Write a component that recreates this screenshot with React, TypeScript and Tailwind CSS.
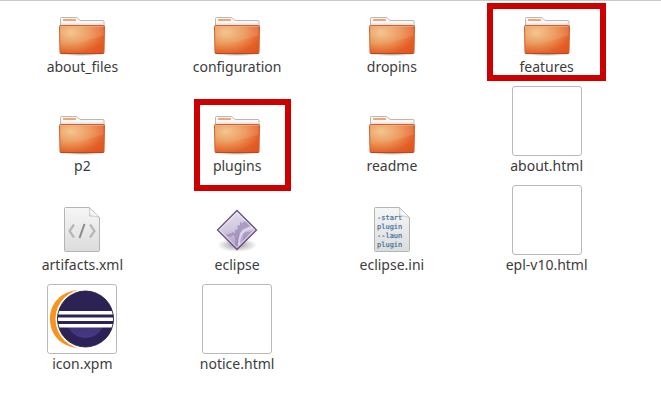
import type { ReactNode } from 'react';

type IconKind = 'folder' | 'blank' | 'xml' | 'ini' | 'launcher' | 'logo';

interface FileEntry {
  name: string;
  kind: IconKind;
  mark?: string;
}

const FILES: FileEntry[] = [
  { name: 'about_files', kind: 'folder' },
  { name: 'configuration', kind: 'folder' },
  { name: 'dropins', kind: 'folder' },
  { name: 'features', kind: 'folder', mark: 'top-0.5 left-[18px] w-[119px] h-[78px]' },
  { name: 'p2', kind: 'folder' },
  { name: 'plugins', kind: 'folder', mark: 'top-[13px] left-[34px] w-[97px] h-[92px]' },
  { name: 'readme', kind: 'folder' },
  { name: 'about.html', kind: 'blank' },
  { name: 'artifacts.xml', kind: 'xml' },
  { name: 'eclipse', kind: 'launcher' },
  { name: 'eclipse.ini', kind: 'ini' },
  { name: 'epl-v10.html', kind: 'blank' },
  { name: 'icon.xpm', kind: 'logo' },
  { name: 'notice.html', kind: 'blank' },
];

// Gradients shared by every icon, defined once for the page
function IconDefs() {
  return (
    <svg className="absolute w-0 h-0" aria-hidden="true">
      <defs>
        <radialGradient id="folderFront" cx="0.25" cy="0.25" r="0.95">
          <stop offset="0" stopColor="#f3c48d" />
          <stop offset="0.45" stopColor="#eb9455" />
          <stop offset="0.8" stopColor="#e55e27" />
          <stop offset="1" stopColor="#e2551f" />
        </radialGradient>
        <linearGradient id="folderShine" x1="0" y1="0" x2="1" y2="0">
          <stop offset="0" stopColor="#fff" stopOpacity="0.02" />
          <stop offset="1" stopColor="#fff" stopOpacity="0.12" />
        </linearGradient>
        <linearGradient id="paper" x1="0" y1="0" x2="0" y2="1">
          <stop offset="0" stopColor="#f6f6f6" />
          <stop offset="1" stopColor="#dcdcdc" />
        </linearGradient>
        <linearGradient id="paperFold" x1="0" y1="1" x2="1" y2="0">
          <stop offset="0" stopColor="#d6d6d6" />
          <stop offset="0.4" stopColor="#ffffff" />
          <stop offset="1" stopColor="#e4e4e4" />
        </linearGradient>
        <linearGradient id="diamond" x1="0.3" y1="0" x2="0.5" y2="1">
          <stop offset="0" stopColor="#e6e1ec" />
          <stop offset="0.5" stopColor="#cfc6dc" />
          <stop offset="1" stopColor="#a797c6" />
        </linearGradient>
        <radialGradient id="softShadow">
          <stop offset="0" stopColor="#000" stopOpacity="0.4" />
          <stop offset="1" stopColor="#000" stopOpacity="0" />
        </radialGradient>
        <linearGradient id="globeInner" x1="0" y1="0" x2="0" y2="1">
          <stop offset="0.3" stopColor="#2c2255" />
          <stop offset="0.7" stopColor="#40337a" />
          <stop offset="1" stopColor="#473985" />
        </linearGradient>
        <clipPath id="globeClip">
          <circle cx="37.500" cy="34" r="28" />
        </clipPath>
      </defs>
    </svg>
  );
}

function FolderIcon() {
  return (
    <svg className="size-12" viewBox="0 0 48 48" aria-hidden="true">
      <ellipse cx="24" cy="45" rx="23" ry="2" fill="url(#softShadow)" />
      <path d="M2.500 20V9.500q0-1 1-1H18q1 0 1.600.7l1.800 1.800q.6.500 1.600.5H45q1 0 1 1V20z" fill="#f7f7f6" stroke="#bab8b4" />
      <rect x="5" y="10" width="13" height="2" rx="0.5" fill="#f3a473" />
      <path d="M3 14.500h42.500V16H3z" fill="#e4e2df" />
      <path d="M1.500 17.500q0-1 1-1h43q1 0 1 1L46 43.500q0 1-1 1H3q-1 0-1-1z" fill="url(#folderFront)" stroke="#d0602e" />
      <path d="M2.500 17.500h43" stroke="#f3b68a" strokeOpacity="0.6" />
      <path d="M2.500 17.500h43v9Q24 34 2.500 36z" fill="url(#folderShine)" />
      <path d="M2.500 44.500h43" stroke="#a53a12" strokeOpacity="0.6" />
    </svg>
  );
}

function Paper({ children }: { children: ReactNode }) {
  return (
    <svg className="size-12" viewBox="0 0 48 48" aria-hidden="true">
      <path d="M6.500 1.500q0-1 1-1H31L41.500 10.500V43.500q0 1-1 1h-33q-1 0-1-1z" fill="url(#paper)" stroke="#b4b4b4" />
      {children}
      <path d="M31 .5q1.500 3 .5 8.500 5.500-.5 10 1.500z" fill="url(#paperFold)" stroke="#bdbdbd" strokeWidth="0.8" />
    </svg>
  );
}

function XmlIcon() {
  return (
    <Paper>
      <path d="M16 17.500L11.500 24l4.500 6.500M32 17.500l4.500 6.500L32 30.500" fill="none" stroke="#b7b7b7" strokeWidth="2.200" />
      <path d="M26.500 17l-5 14" stroke="#8a8a8a" strokeWidth="2" />
    </Paper>
  );
}

function IniIcon() {
  return (
    <Paper>
      <g fontFamily="'DejaVu Sans Mono', monospace" fontSize="7" fill="#3f6f9c" stroke="#3f6f9c" strokeWidth="0.2">
        <text x="9" y="13">-start</text>
        <text x="9" y="22">plugin</text>
        <text x="9" y="31">--laun</text>
        <text x="9" y="40">plugin</text>
      </g>
    </Paper>
  );
}

function LauncherIcon() {
  return (
    <svg className="size-12" viewBox="0 0 48 48" aria-hidden="true">
      <ellipse cx="24" cy="38" rx="20" ry="7" fill="url(#softShadow)" />
      <path d="M24 3.500L43.500 23 24 42.500 4.500 23z" fill="url(#diamond)" stroke="#6b4f84" strokeWidth="1.300" />
      <path d="M13 27l2 1 1-2 2 1 1-2 3 1v-3l3-1-1-3 3-1v-3l3 1 1-2 3 1 3 4-4 2-3 1-3 4-1 6-2 7-2 1q1-7-1-12l-4 2-3-1z" fill="#8f7fae" fillOpacity="0.6" />
      <path d="M40 21q-9 1-12 6-2 5-2 11" fill="none" stroke="#e3deec" strokeOpacity="0.8" strokeWidth="2" />
      <path d="M31 26l8-2-9 10q-1-4 1-8z" fill="#8f7fae" fillOpacity="0.5" />
      <path d="M24 5.500L41.500 23 24 40.500 6.500 23z" fill="none" stroke="#fff" strokeOpacity="0.6" />
    </svg>
  );
}

function LogoIcon() {
  return (
    <svg className="size-full" viewBox="0 0 68 68" aria-hidden="true">
      <path d="M32 5C15 5 2 17 2 34s13 29 30 29C18 59 8 48 8 34S18 9 32 5z" fill="#f7941e" />
      <circle cx="37.500" cy="34" r="30" fill="#fff" />
      <circle cx="37.500" cy="34" r="28" fill="#2c2255" />
      <circle cx="37.500" cy="34" r="19" fill="url(#globeInner)" />
      <g clipPath="url(#globeClip)">
        <path d="M9 29h57v10H9z" fill="#2c2255" />
        <path d="M9 26h57v3.500H9zM9 32.500h57V36H9zM9 39h57v3.500H9z" fill="#fff" />
      </g>
      <circle cx="37.500" cy="34" r="28" fill="none" stroke="#1c1633" strokeWidth="0.8" />
    </svg>
  );
}

function FileIcon({ kind }: { kind: IconKind }) {
  switch (kind) {
    case 'folder':
      return <FolderIcon />;
    case 'xml':
      return <XmlIcon />;
    case 'ini':
      return <IniIcon />;
    case 'launcher':
      return <LauncherIcon />;
    default:
      return (
        <span className="block size-[70px] rounded-[3px] border border-[#babab5] bg-white">
          {kind === 'logo' && <LogoIcon />}
        </span>
      );
  }
}

function FileTile({ file }: { file: FileEntry }) {
  return (
    <li className="relative flex flex-col items-center justify-end pb-[9px]">
      <button type="button" className="flex flex-col items-center">
        <FileIcon kind={file.kind} />
        <span className="text-sm leading-5 whitespace-nowrap">{file.name}</span>
      </button>
      {file.mark && (
        <span className={`absolute border-6 border-[#cc0000] pointer-events-none ${file.mark}`} />
      )}
    </li>
  );
}

export default function App() {
  return (
    <main className="min-h-screen bg-white border-t border-[#cdc9c5] text-[#3c3c3c] font-['Noto_Sans',sans-serif]">
      <IconDefs />
      <ul className="grid grid-cols-4 grid-rows-[85px] auto-rows-[99px] pl-[5px] pr-[37px]">
        {FILES.map((file) => (
          <FileTile key={file.name} file={file} />
        ))}
      </ul>
    </main>
  );
}
